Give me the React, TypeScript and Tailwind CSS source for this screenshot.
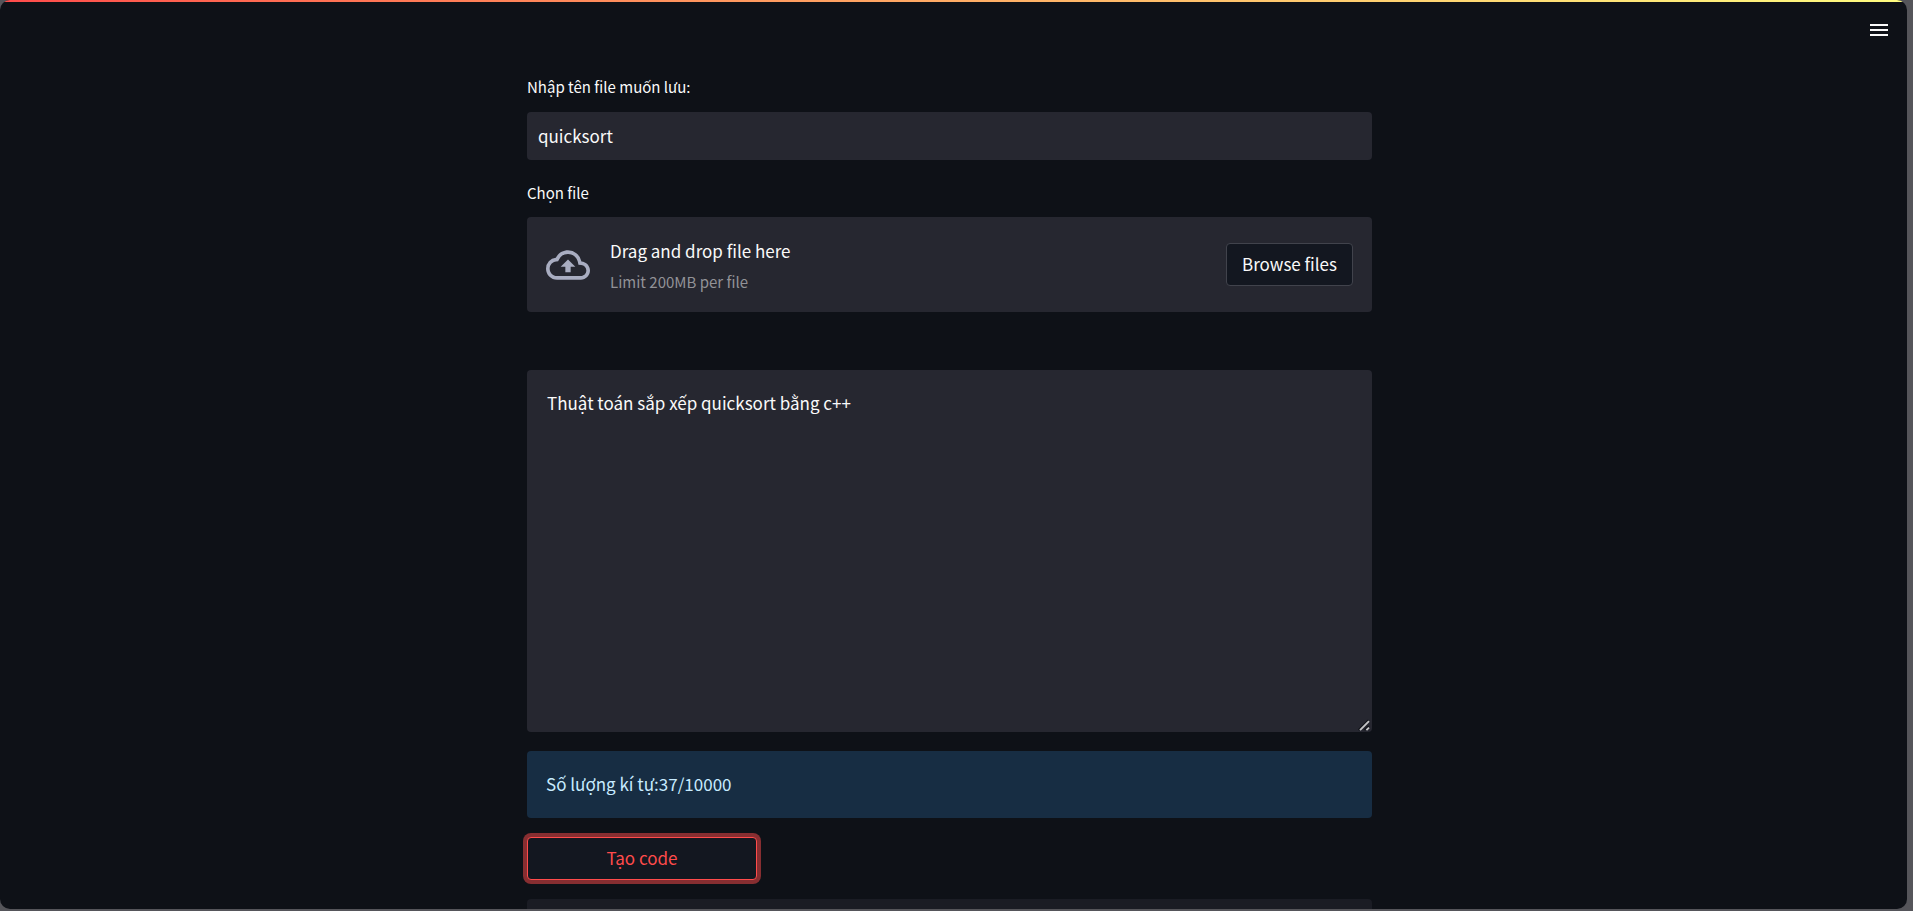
import { useState } from "react";
import { MdMenu, MdOutlineCloudUpload } from "react-icons/md";

const MAX_CHARS = 10000;

function ResizeGrip() {
  return (
    <svg
      viewBox="0 0 14 14"
      aria-hidden="true"
      className="pointer-events-none absolute right-0 bottom-0 size-3.5"
      fill="none"
    >
      <path d="M0.5 12 10.5 2M6.5 12 10.5 8" stroke="#111318" strokeWidth="1.6" />
      <path d="M2 12.2 11 3.2M8.4 12.2 11 9.6" stroke="#c4c4c6" strokeWidth="1.9" />
    </svg>
  );
}

export default function App() {
  const [name, setName] = useState("quicksort");
  const [prompt, setPrompt] = useState("Thuật toán sắp xếp quicksort bằng c++");

  return (
    <div className="h-screen overflow-hidden bg-[#55555a] pr-1.5 pb-0.5 font-['Noto_Sans_CJK_SC','Noto_Sans',sans-serif] text-[17px] leading-[27px] text-[#fafafa]">
      <div className="flex h-full flex-col overflow-hidden rounded-[10px] bg-[#0e1117] pr-2">
        <div className="-mr-2 h-0.5 shrink-0 bg-linear-to-r from-[#ff4b4b] to-[#fffd80]" />
        <header className="flex shrink-0 justify-end px-2 pt-4">
          <button type="button" aria-label="Menu" className="size-6">
            <MdMenu className="size-6" />
          </button>
        </header>

        <main className="mx-auto flex w-full max-w-[845px] flex-col pt-8">
          <label htmlFor="filename" className="mb-3 text-[15px] leading-[26px]">
            Nhập tên file muốn lưu:
          </label>
          <input
            id="filename"
            value={name}
            onChange={(e) => setName(e.target.value)}
            className="h-12 w-full shrink-0 rounded bg-[#262730] px-[11px] pb-0.5 outline-none"
          />

          <label htmlFor="upload" className="mt-5 mb-[11px] text-[15px] leading-[26px]">
            Chọn file
          </label>
          <section className="flex h-[95px] shrink-0 items-center rounded bg-[#262730] px-[19px]">
            <MdOutlineCloudUpload className="mr-5 size-11 text-[#a9adc1]" />
            <div className="flex flex-col gap-[5px] pt-[3px]">
              <span>Drag and drop file here</span>
              <small className="text-[15px] leading-[26px] text-[#929297]">Limit 200MB per file</small>
            </div>
            <button
              id="upload"
              type="button"
              className="ml-auto h-[43px] rounded border border-[#41434c] bg-[#131720] px-[15px] pb-0.5"
            >
              Browse files
            </button>
          </section>

          <div className="relative mt-[58px] flex shrink-0">
            <textarea
              aria-label="Prompt"
              value={prompt}
              onChange={(e) => setPrompt(e.target.value)}
              className="h-[362px] w-full resize-y rounded bg-[#262730] px-5 pt-[19px] pb-5 outline-none [&::-webkit-resizer]:bg-transparent"
            />
            <ResizeGrip />
          </div>

          <div
            role="status"
            className="mt-[19px] shrink-0 rounded bg-[#172d43] px-[19px] pt-[19px] pb-[21px] text-[#c7ebff]"
          >
            Số lượng kí tự:{prompt.length}/{MAX_CHARS}
          </div>

          <button
            type="button"
            className="mt-[19px] h-[43px] w-[230px] shrink-0 rounded border border-[#ff4b4b] bg-[#131720] pb-0.5 text-[#ff4b4b] ring-4 ring-[#ff4b4b]/50"
          >
            Tạo code
          </button>

          <div className="mt-[19px] h-16 shrink-0 rounded bg-[#1a1c24]" />
        </main>
      </div>
    </div>
  );
}
